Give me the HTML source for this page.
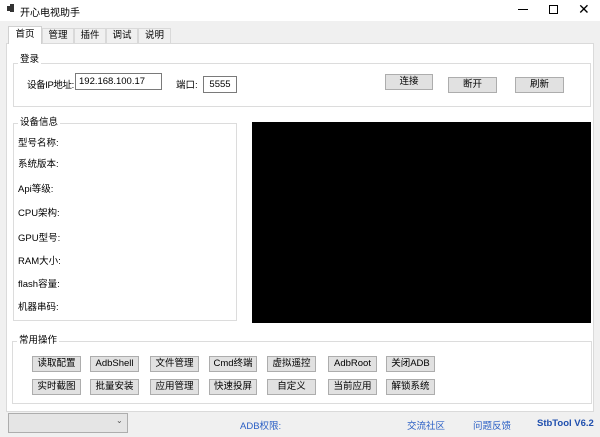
<!DOCTYPE html>
<html><head><meta charset="utf-8"><style>
*{margin:0;padding:0;box-sizing:border-box}
body{width:600px;height:437px;background:#f0f0f0;font-family:"Liberation Sans","Noto Sans CJK SC",sans-serif;font-size:9.5px;color:#000;position:relative;overflow:hidden}
.a{position:absolute;white-space:nowrap}
.title{left:0;top:0;width:600px;height:21px;background:#fff}
.tab{border:1px solid #d9d9d9;border-bottom:none;background:#f0f0f0;height:15px;top:28px;text-align:center;line-height:14px}
.grp{border:1px solid #dcdcdc}
.lg{background:#fff;padding:0 2px;line-height:11px}
.btn{background:#e1e1e1;border:1px solid #adadad;text-align:center;line-height:14px;height:16px}
.inp{background:#fff;border:1px solid #7a7a7a;line-height:15px;padding-left:3px;height:17px}
.lnk{color:#2a5fc5}
</style></head><body>
<div class="a title"></div>
<div class="a" style="left:7px;top:6px;width:3px;height:5px;background:#333"></div>
<div class="a" style="left:10px;top:4px;width:4px;height:8px;background:#333"></div>
<div class="a" style="left:20px;top:4px;font-size:10px">开心电视助手</div>
<div class="a" style="left:518px;top:9px;width:10px;height:1px;background:#000"></div>
<div class="a" style="left:549px;top:5px;width:9px;height:9px;border:1px solid #000"></div>
<div class="a" style="left:578px;top:1px;font-size:14px">✕</div>

<div class="a" style="left:6px;top:43px;width:588px;height:369px;background:#fff;border:1px solid #dadada"></div>
<div class="a tab" style="left:8px;top:26px;width:34px;height:18px;background:#fff;border-color:#d0d0d0;line-height:16px">首页</div>
<div class="a tab" style="left:42px;width:32px">管理</div>
<div class="a tab" style="left:74px;width:32px">插件</div>
<div class="a tab" style="left:106px;width:32px">调试</div>
<div class="a tab" style="left:138px;width:33px">说明</div>

<div class="a grp" style="left:13px;top:63px;width:578px;height:44px"></div>
<div class="a lg" style="left:18px;top:54px">登录</div>
<div class="a" style="left:27px;top:77px;letter-spacing:-0.4px">设备IP地址:</div>
<div class="a inp" style="left:75px;top:73px;width:87px">192.168.100.17</div>
<div class="a" style="left:176px;top:77px">端口:</div>
<div class="a inp" style="left:203px;top:76px;width:34px;text-align:center;padding:0">5555</div>
<div class="a btn" style="left:385px;top:74px;width:48px">连接</div>
<div class="a btn" style="left:448px;top:77px;width:49px">断开</div>
<div class="a btn" style="left:515px;top:77px;width:49px">刷新</div>

<div class="a grp" style="left:13px;top:123px;width:224px;height:198px"></div>
<div class="a lg" style="left:18px;top:117px">设备信息</div>
<div class="a" style="left:18px;top:135px">型号名称:</div>
<div class="a" style="left:18px;top:156px">系统版本:</div>
<div class="a" style="left:18px;top:181px">Api等级:</div>
<div class="a" style="left:18px;top:205px">CPU架构:</div>
<div class="a" style="left:18px;top:230px">GPU型号:</div>
<div class="a" style="left:18px;top:253px">RAM大小:</div>
<div class="a" style="left:18px;top:276px">flash容量:</div>
<div class="a" style="left:18px;top:299px">机器串码:</div>
<div class="a" style="left:252px;top:122px;width:339px;height:201px;background:#000"></div>

<div class="a grp" style="left:12px;top:341px;width:580px;height:63px"></div>
<div class="a lg" style="left:17px;top:335px">常用操作</div>
<div class="a btn" style="left:32px;top:356px;width:49px">读取配置</div>
<div class="a btn" style="left:90px;top:356px;width:49px">AdbShell</div>
<div class="a btn" style="left:150px;top:356px;width:49px">文件管理</div>
<div class="a btn" style="left:209px;top:356px;width:48px">Cmd终端</div>
<div class="a btn" style="left:267px;top:356px;width:49px">虚拟遥控</div>
<div class="a btn" style="left:328px;top:356px;width:49px">AdbRoot</div>
<div class="a btn" style="left:386px;top:356px;width:49px">关闭ADB</div>
<div class="a btn" style="left:32px;top:379px;width:49px">实时截图</div>
<div class="a btn" style="left:90px;top:379px;width:49px">批量安装</div>
<div class="a btn" style="left:150px;top:379px;width:49px">应用管理</div>
<div class="a btn" style="left:209px;top:379px;width:48px">快速投屏</div>
<div class="a btn" style="left:267px;top:379px;width:49px">自定义</div>
<div class="a btn" style="left:328px;top:379px;width:49px">当前应用</div>
<div class="a btn" style="left:386px;top:379px;width:49px">解锁系统</div>

<div class="a" style="left:8px;top:413px;width:120px;height:20px;background:#e5e5e5;border:1px solid #adadad"></div>
<div class="a" style="left:116px;top:416px;font-size:8px;color:#555">⌄</div>
<div class="a lnk" style="left:240px;top:418px">ADB权限:</div>
<div class="a lnk" style="left:407px;top:418px">交流社区</div>
<div class="a lnk" style="left:473px;top:418px">问题反馈</div>
<div class="a lnk" style="left:537px;top:418px;font-weight:bold;color:#1f4fae">StbTool V6.2</div>
</body></html>
